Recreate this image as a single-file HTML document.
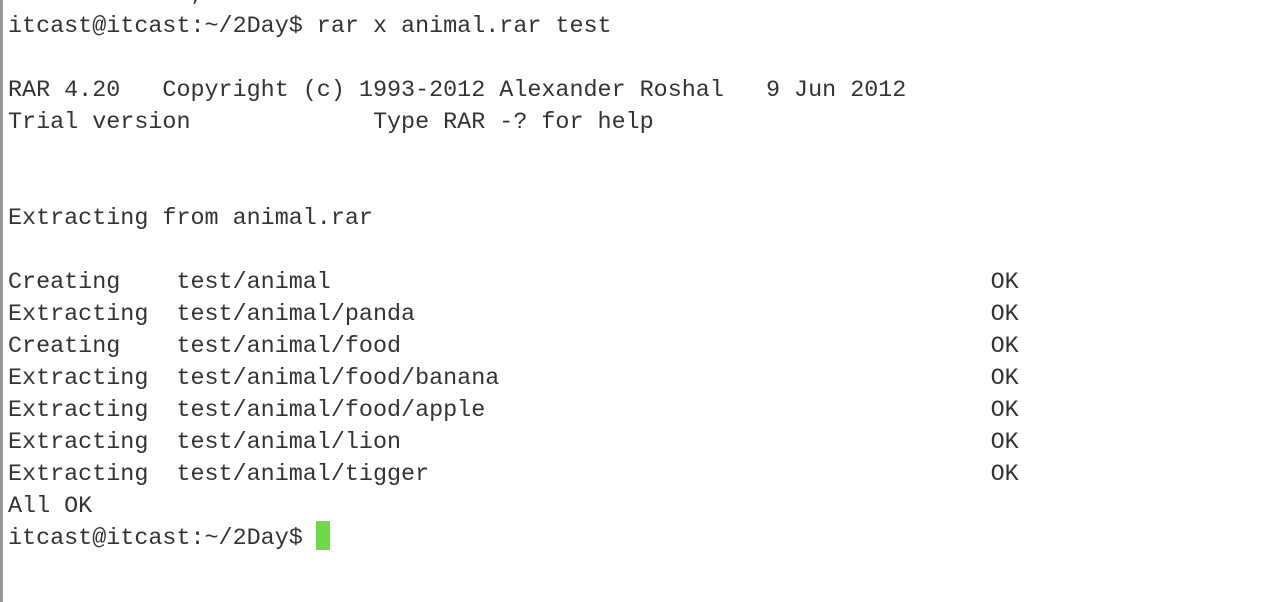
<!DOCTYPE html>
<html><head><style>
html,body{margin:0;padding:0;background:#fff;width:1286px;height:602px;overflow:hidden;position:relative}
.bl{position:absolute;left:0;top:0;width:3px;height:602px;background:#9a9a9a}
pre{position:absolute;left:8px;top:-21px;margin:0;font-family:"Liberation Mono",monospace;font-size:23.4px;line-height:32px;color:#333;letter-spacing:0}
.cur{position:absolute;left:316px;top:521px;width:14px;height:29px;background:#6fd94a}
</style></head><body>
<div class="bl"></div>
<pre>3 directories, 3 files
itcast@itcast:~/2Day$ rar x animal.rar test

RAR 4.20   Copyright (c) 1993-2012 Alexander Roshal   9 Jun 2012
Trial version             Type RAR -? for help


Extracting from animal.rar

Creating    test/animal                                               OK
Extracting  test/animal/panda                                         OK
Creating    test/animal/food                                          OK
Extracting  test/animal/food/banana                                   OK
Extracting  test/animal/food/apple                                    OK
Extracting  test/animal/lion                                          OK
Extracting  test/animal/tigger                                        OK
All OK
itcast@itcast:~/2Day$ </pre>
<div class="cur"></div>
</body></html>
